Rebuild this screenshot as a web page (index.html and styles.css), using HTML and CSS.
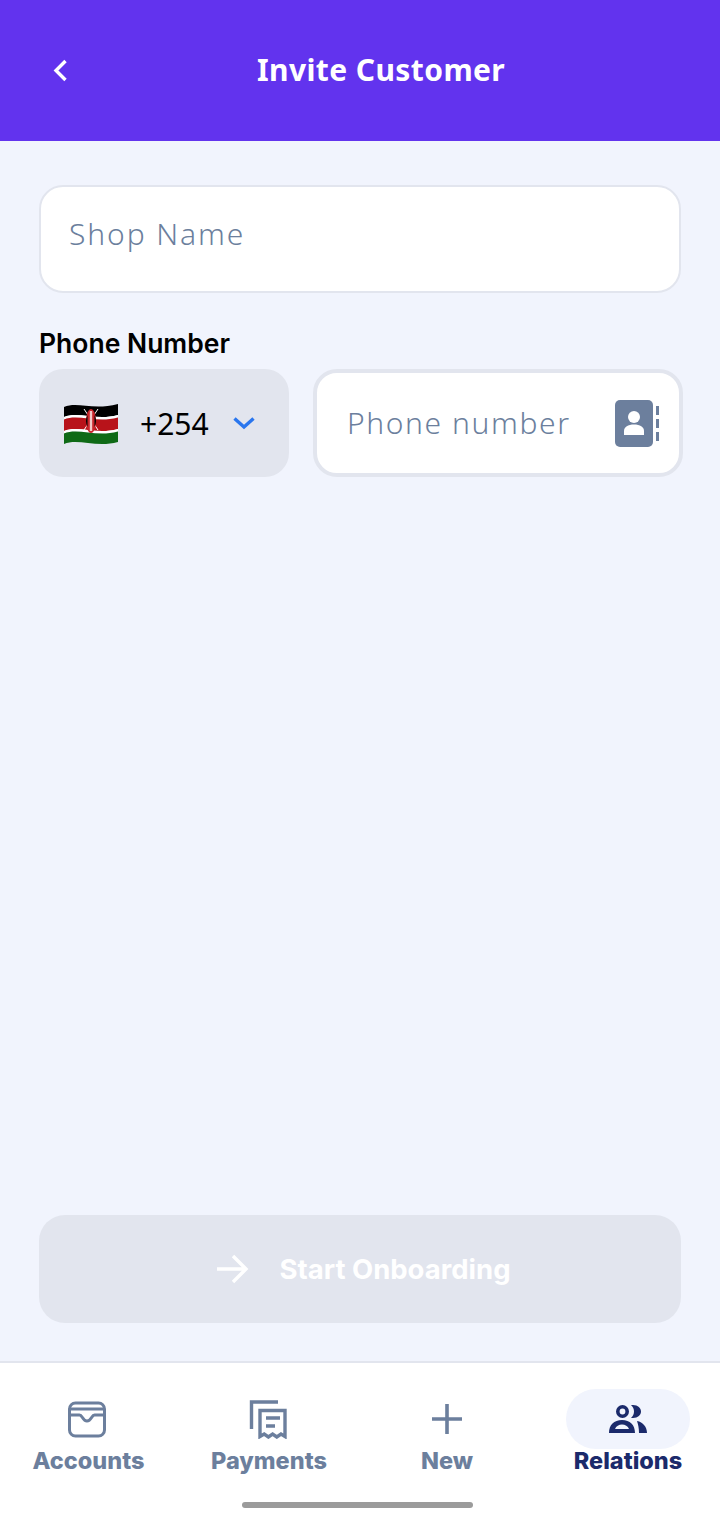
FILE: index.html
```html
<!DOCTYPE html>
<html lang="en">
<head>
    <meta charset="UTF-8">
    <meta name="viewport" content="width=device-width, initial-scale=1.0">
    <title>Invite Customer</title>
    <link rel="stylesheet" href="styles.css">
</head>
<body>
    <!-- Header Section -->
    <header class="app-header">
        <button class="back-btn" aria-label="Back">
            <svg width="20" height="28" viewBox="0 0 20 28"><path d="M15.500 4 6 13.500l9.500 9.500" fill="none" stroke="#fff" stroke-width="3.400"/></svg>
        </button>
        <h1>Invite Customer</h1>
    </header>

    <!-- Form -->
    <main class="content">
        <div class="text-field">Shop Name</div>

        <div class="field-label">Phone Number</div>
        <div class="phone-row">
            <div class="country-select">
                <svg class="flag" width="58" height="44" viewBox="0 0 58 44">
                    <path d="M2 5C16 -1 30 9 56 2v11C34 19 16 9 2 15z" fill="#000"/>
                    <path d="M2 15C16 9 34 19 56 13v2.500C34 21.500 16 11.500 2 17.500z" fill="#fff"/>
                    <path d="M2 17.500C16 11.500 34 21.500 56 15.500v11.500C34 33 16 23 2 29z" fill="#b8131a"/>
                    <path d="M2 29C16 23 34 33 56 27v2.500C34 35.500 16 25.500 2 31.500z" fill="#fff"/>
                    <path d="M2 31.500C16 25.500 34 35.500 56 29.500v10.500C34 46 16 36 2 42z" fill="#0f6a16"/>
                    <path d="M22 7 36 28M36 7 22 28" stroke="#fff" stroke-width="1"/>
                    <ellipse cx="29" cy="19" rx="5" ry="12" fill="#c8252b"/>
                    <path d="M25.500 13c-2 4-2 8 0 12zM32.500 13c2 4 2 8 0 12z" fill="#000"/>
                    <path d="M29 9v20" stroke="#f3c9c9" stroke-width="2.400"/>
                </svg>
                <span class="dial-code">+254</span>
                <svg width="24" height="14" viewBox="0 0 24 14"><path d="M2.500 2.500 12 11l9.500-8.500" fill="none" stroke="#2a76ee" stroke-width="3.400"/></svg>
            </div>
            <div class="phone-input">
                <span>Phone number</span>
                <svg class="contact-icon" width="44" height="48" viewBox="0 0 44 48">
                    <rect x="0" y="0" width="38" height="47" rx="5" fill="#6c7f9d"/>
                    <circle cx="19" cy="17" r="6" fill="#fff"/>
                    <path d="M9 35v-4c0-4 4-6.500 10-6.500S29 27 29 31v4z" fill="#fff"/>
                    <path d="M42.500 6v9M42.500 19v9M42.500 32v9" stroke="#6c7f9d" stroke-width="3"/>
                </svg>
            </div>
        </div>

        <button class="start-btn">
            <svg width="34" height="32" viewBox="0 0 34 32"><path d="M2 16h29M18 3l13 13-13 13" fill="none" stroke="#fff" stroke-width="3.400"/></svg>
            <span>Start Onboarding</span>
        </button>
    </main>

    <!-- Navigation Bar -->
    <nav class="tab-bar">
        <div class="tabs">
            <div class="tab">
                <div class="tab-icon">
                    <svg class="nudge" width="40" height="38" viewBox="0 0 40 38" fill="none" stroke="#6c7f9d" stroke-width="3">
                        <rect x="2.500" y="3" width="35" height="33" rx="6"/>
                        <path d="M2.500 9h35"/>
                        <path d="M2.500 15h10c3 0 3 6 7.500 6s4.500-6 7.500-6h10"/>
                    </svg>
                </div>
                <span>Accounts</span>
            </div>
            <div class="tab">
                <div class="tab-icon">
                    <svg class="nudge" width="40" height="40" viewBox="0 0 40 40" fill="none" stroke="#6c7f9d" stroke-width="3.400">
                        <path d="M30 3H3.500v27"/>
                        <path d="M12 11.500h25v26l-4-2.500-4.200 3-4.200-3-4.200 3-4.200-3-4.200 2.500z"/>
                        <path d="M18 19h14M18 27h9"/>
                    </svg>
                </div>
                <span>Payments</span>
            </div>
            <div class="tab">
                <div class="tab-icon">
                    <svg width="32" height="32" viewBox="0 0 32 32"><path d="M16 1v30M1 16h30" fill="none" stroke="#6c7f9d" stroke-width="3.600"/></svg>
                </div>
                <span>New</span>
            </div>
            <div class="tab active">
                <div class="tab-icon">
                    <svg width="40" height="30" viewBox="0 0 40 30" fill="#1b2a6b">
                        <circle cx="14.500" cy="7.500" r="4.700" fill="none" stroke="#1b2a6b" stroke-width="3.600"/>
                        <path d="M23 1h2c5 0 8 3 8 6.500S30 14 25 14h-2c2-2 3-4 3-6.500S25 3 23 1z"/>
                        <path d="M1 29c0-8 5-13 13-13s13 5 13 13zM7 25h14c-1-3-4-4.500-7-4.500S8 22 7 25z" fill-rule="evenodd"/>
                        <path d="M29 17c6 1 10 6 10 12h-8c0-5-1-9-2-12z"/>
                    </svg>
                </div>
                <span>Relations</span>
            </div>
        </div>
        <div class="home-indicator"></div>
    </nav>
</body>
</html>
```

FILE: styles.css
```css
* {
    box-sizing: border-box;
}

body {
    margin: 0;
    font-family: 'Noto Sans', sans-serif;
    background-color: #f1f4fd;
    display: flex;
    flex-direction: column;
    height: 100vh;
}

/* Header Section */
.app-header {
    height: 141px;
    flex: none;
    background: #6233ee;
    color: white;
    display: flex;
    align-items: center;
    padding: 0 0 0 50px;
}

.back-btn {
    background: none;
    border: none;
    padding: 0;
    width: 20px;
    height: 28px;
}

.app-header h1 {
    margin: 0 0 2px 187px;
    font-size: 30px;
    font-weight: 700;
    letter-spacing: 0.4px;
}

/* Form */
.content {
    flex: 1;
    display: flex;
    flex-direction: column;
    padding: 44px 39px 38px;
}

.text-field {
    height: 108px;
    flex: none;
    background: #fff;
    border: 2px solid #e2e5ee;
    border-radius: 24px;
    padding: 27px 28px 0;
    font-size: 30px;
    font-weight: 350;
    line-height: 40px;
    letter-spacing: 1.9px;
    color: #6c7f9d;
}

.field-label {
    margin-top: 31px;
    margin-bottom: 7px;
    font-family: 'Inter', sans-serif;
    font-size: 26.500px;
    font-weight: 600;
    line-height: 38px;
    color: #000;
}

.phone-row {
    display: flex;
    gap: 24px;
    margin-right: -2px;
}

.country-select {
    width: 250px;
    height: 108px;
    background: #e2e5ee;
    border-radius: 24px;
    display: flex;
    align-items: center;
    padding-left: 23px;
}

.flag {
    margin-top: 2px;
}

.dial-code {
    margin-left: 20px;
    margin-right: 23px;
    font-size: 30px;
    color: #000;
}

.phone-input {
    flex: 1;
    height: 108px;
    background: #fff;
    border: 4px solid #e2e5ee;
    border-radius: 24px;
    display: flex;
    align-items: center;
    justify-content: space-between;
    padding: 0 20px 2px 30px;
    font-size: 30px;
    font-weight: 350;
    letter-spacing: 1.6px;
    color: #6c7f9d;
}

.contact-icon {
    margin-top: 4px;
}

.start-btn {
    margin-top: auto;
    height: 108px;
    flex: none;
    background: #e2e5ee;
    border: none;
    border-radius: 26px;
    display: flex;
    align-items: center;
    justify-content: center;
    gap: 30px;
    padding: 0 0 0 6px;
    color: #fff;
    font-family: 'Inter', sans-serif;
    font-size: 27.500px;
    font-weight: 700;
}

/* Navigation Bar */
.tab-bar {
    flex: none;
    height: 159px;
    background: #fff;
    border-top: 2px solid #e2e5ee;
    display: flex;
    flex-direction: column;
    align-items: center;
}

.tabs {
    align-self: stretch;
    display: grid;
    grid-template-columns: 177px 184px 172px 1fr;
    padding-top: 26px;
}

.tab {
    display: flex;
    flex-direction: column;
    align-items: center;
    font-family: 'Inter', sans-serif;
    font-size: 23.500px;
    font-weight: 800;
    line-height: 24px;
    color: #6c7f9d;
}

.tab-icon {
    width: 124px;
    height: 60px;
    border-radius: 30px;
    display: flex;
    align-items: center;
    justify-content: center;
}

.nudge {
    margin-right: 3px;
}

.tab.active {
    margin-left: 3px;
    color: #1b2a6b;
}

.tab.active .tab-icon {
    background: #f1f4fd;
}

.home-indicator {
    width: 231px;
    height: 6px;
    margin: 29px 6px 0 0;
    background: #9b9b9b;
    border-radius: 3px;
}
```
